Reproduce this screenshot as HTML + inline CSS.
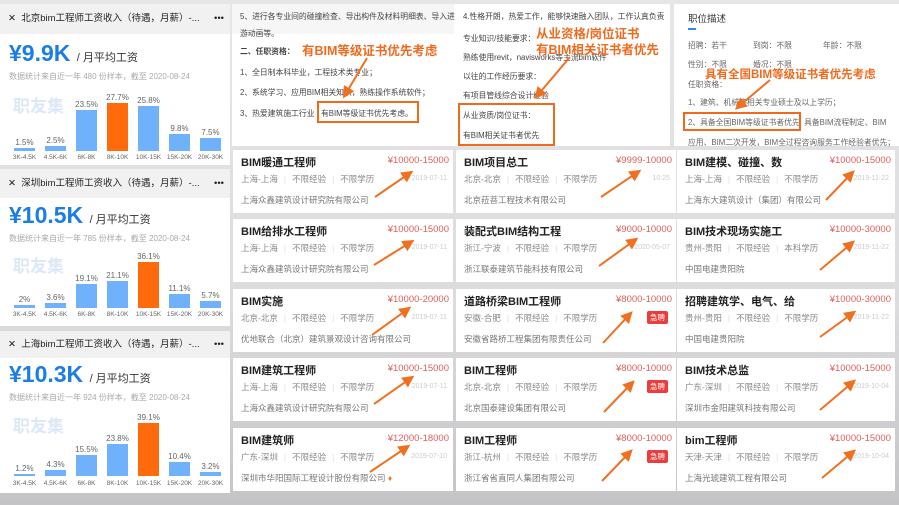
<!DOCTYPE html>
<html><head><meta charset="utf-8"><style>
*{margin:0;padding:0;box-sizing:border-box}
body{width:899px;height:505px;overflow:hidden;position:relative;font-family:"Liberation Sans","Noto Sans CJK SC",sans-serif;background:linear-gradient(180deg,#e6e6e8 0%,#dcdcde 60%,#c4c4c6 100%)}
.a{position:absolute;white-space:nowrap}
.hd{position:absolute;left:0;width:230px;background:#f1f1f1;font-size:9.5px;color:#222;padding-left:8px;white-space:nowrap;overflow:hidden}
.bd{position:absolute;left:0;width:230px;background:#fff}
.big{position:absolute;left:9px;color:#1a7ee6;font-weight:bold;font-size:23px}
.unit{font-size:11px;color:#333;font-weight:normal}
.st{position:absolute;left:9px;font-size:8px;color:#aaa;white-space:nowrap}
.wm{position:absolute;left:13px;font-size:17px;color:#dbe8f6;font-weight:bold}
.bar{position:absolute;width:21px;background:#6fb2fb}
.bar.o{background:#ff6a0a}
.pc{position:absolute;width:31px;text-align:center;font-size:8px;color:#666;margin-left:-5px}
.lb{position:absolute;width:31px;text-align:center;font-size:6.5px;color:#666;margin-left:-5px}
.card{position:absolute;background:#fff;height:63px}
.card .t{position:absolute;left:8px;top:4px;font-size:11px;font-weight:bold;color:#222;white-space:nowrap}
.card .s{position:absolute;right:4px;top:5px;font-size:9.5px;color:#e0605a}
.card .m{position:absolute;left:8px;top:23px;font-size:8.5px;color:#888;white-space:nowrap}
.card .m i{font-style:normal;color:#ddd;margin:0 6px}
.card .d{position:absolute;right:6px;top:25px;font-size:7px;color:#ccc}
.card .u{position:absolute;right:8px;top:22px;font-size:7.5px;color:#fff;background:#ea3d3d;border-radius:2px;padding:1px 3px}
.card .c{position:absolute;left:8px;top:44px;font-size:8.5px;color:#777;white-space:nowrap}
.tx{position:absolute;font-size:7.8px;color:#444;white-space:nowrap}
.or{position:absolute;color:#f06a1e;font-weight:bold;white-space:nowrap}
.box{position:absolute;border:2px solid #f06a1e}
</style></head><body>

<div class="hd" style="top:4px;height:30px;line-height:30px">✕&nbsp;&nbsp;北京bim工程师工资收入（待遇，月薪）-... <span style="position:absolute;right:6px">•••</span></div>
<div class="bd" style="top:34px;height:131px"></div>
<div class="big" style="top:40px">¥9.9K <span class="unit">/ 月平均工资</span></div>
<div class="st" style="top:71px">数据统计来自近一年 480 份样本，截至 2020-08-24</div>
<div class="wm" style="top:92px">职友集</div>

<div class="hd" style="top:169px;height:29px;line-height:29px">✕&nbsp;&nbsp;深圳bim工程师工资收入（待遇，月薪）-... <span style="position:absolute;right:6px">•••</span></div>
<div class="bd" style="top:198px;height:128px"></div>
<div class="big" style="top:202px">¥10.5K <span class="unit">/ 月平均工资</span></div>
<div class="st" style="top:233px">数据统计来自近一年 785 份样本，截至 2020-08-24</div>
<div class="wm" style="top:252px">职友集</div>

<div class="hd" style="top:331px;height:27px;line-height:27px">✕&nbsp;&nbsp;上海bim工程师工资收入（待遇，月薪）-... <span style="position:absolute;right:6px">•••</span></div>
<div class="bd" style="top:358px;height:135px"></div>
<div class="big" style="top:361px">¥10.3K <span class="unit">/ 月平均工资</span></div>
<div class="st" style="top:392px">数据统计来自近一年 924 份样本，截至 2020-08-24</div>
<div class="wm" style="top:412px">职友集</div>

<div class="bar" style="left:14px;top:148px;height:3px"></div><div class="pc" style="left:14px;top:138px">1.5%</div>
<div class="bar" style="left:45px;top:146px;height:5px"></div><div class="pc" style="left:45px;top:136px">2.5%</div>
<div class="bar" style="left:76px;top:110px;height:41px"></div><div class="pc" style="left:76px;top:100px">23.5%</div>
<div class="bar o" style="left:107px;top:103px;height:48px"></div><div class="pc" style="left:107px;top:93px">27.7%</div>
<div class="bar" style="left:138px;top:106px;height:45px"></div><div class="pc" style="left:138px;top:96px">25.8%</div>
<div class="bar" style="left:169px;top:134px;height:17px"></div><div class="pc" style="left:169px;top:124px">9.8%</div>
<div class="bar" style="left:200px;top:138px;height:13px"></div><div class="pc" style="left:200px;top:128px">7.5%</div>
<div class="lb" style="left:14px;top:154px">3K-4.5K</div><div class="lb" style="left:45px;top:154px">4.5K-6K</div><div class="lb" style="left:76px;top:154px">6K-8K</div><div class="lb" style="left:107px;top:154px">8K-10K</div><div class="lb" style="left:138px;top:154px">10K-15K</div><div class="lb" style="left:169px;top:154px">15K-20K</div><div class="lb" style="left:200px;top:154px">20K-30K</div>

<div class="bar" style="left:14px;top:305px;height:3px"></div><div class="pc" style="left:14px;top:295px">2%</div>
<div class="bar" style="left:45px;top:303px;height:5px"></div><div class="pc" style="left:45px;top:293px">3.6%</div>
<div class="bar" style="left:76px;top:284px;height:24px"></div><div class="pc" style="left:76px;top:274px">19.1%</div>
<div class="bar" style="left:107px;top:281px;height:27px"></div><div class="pc" style="left:107px;top:271px">21.1%</div>
<div class="bar o" style="left:138px;top:262px;height:46px"></div><div class="pc" style="left:138px;top:252px">36.1%</div>
<div class="bar" style="left:169px;top:294px;height:14px"></div><div class="pc" style="left:169px;top:284px">11.1%</div>
<div class="bar" style="left:200px;top:301px;height:7px"></div><div class="pc" style="left:200px;top:291px">5.7%</div>
<div class="lb" style="left:14px;top:311px">3K-4.5K</div><div class="lb" style="left:45px;top:311px">4.5K-6K</div><div class="lb" style="left:76px;top:311px">6K-8K</div><div class="lb" style="left:107px;top:311px">8K-10K</div><div class="lb" style="left:138px;top:311px">10K-15K</div><div class="lb" style="left:169px;top:311px">15K-20K</div><div class="lb" style="left:200px;top:311px">20K-30K</div>

<div class="bar" style="left:14px;top:474px;height:2px"></div><div class="pc" style="left:14px;top:464px">1.2%</div>
<div class="bar" style="left:45px;top:470px;height:6px"></div><div class="pc" style="left:45px;top:460px">4.3%</div>
<div class="bar" style="left:76px;top:455px;height:21px"></div><div class="pc" style="left:76px;top:445px">15.5%</div>
<div class="bar" style="left:107px;top:444px;height:32px"></div><div class="pc" style="left:107px;top:434px">23.8%</div>
<div class="bar o" style="left:138px;top:423px;height:53px"></div><div class="pc" style="left:138px;top:413px">39.1%</div>
<div class="bar" style="left:169px;top:462px;height:14px"></div><div class="pc" style="left:169px;top:452px">10.4%</div>
<div class="bar" style="left:200px;top:472px;height:4px"></div><div class="pc" style="left:200px;top:462px">3.2%</div>
<div class="lb" style="left:14px;top:480px">3K-4.5K</div><div class="lb" style="left:45px;top:480px">4.5K-6K</div><div class="lb" style="left:76px;top:480px">6K-8K</div><div class="lb" style="left:107px;top:480px">8K-10K</div><div class="lb" style="left:138px;top:480px">10K-15K</div><div class="lb" style="left:169px;top:480px">15K-20K</div><div class="lb" style="left:200px;top:480px">20K-30K</div>

<div style="position:absolute;left:232px;top:4px;width:222px;height:30px;background:#f6f6f6"></div>
<div style="position:absolute;left:232px;top:34px;width:222px;height:112px;background:#fff"></div>
<div style="position:absolute;left:454px;top:4px;width:216px;height:142px;background:#fff"></div>
<div class="tx" style="left:240px;top:11px">5、进行各专业间的碰撞检查、导出构件及材料明细表、导入进</div>
<div class="tx" style="left:240px;top:28px">游动画等。</div>
<div class="tx" style="left:240px;top:46px;font-weight:bold">二、任职资格：</div>
<div class="tx" style="left:240px;top:67px">1、全日制本科毕业，工程技术类专业；</div>
<div class="tx" style="left:240px;top:87px">2、系统学习、应用BIM相关知识，熟练操作系统软件；</div>
<div class="tx" style="left:240px;top:108px">3、热爱建筑施工行业 &nbsp;&nbsp;有BIM等级证书优先考虑。</div>
<div class="box" style="left:317px;top:101px;width:102px;height:22px"></div>
<div class="or" style="left:302px;top:40px;font-size:12.5px">有BIM等级证书优先考虑</div>

<div class="tx" style="left:463px;top:11px">4.性格开朗，热爱工作，能够快速融入团队，工作认真负责</div>
<div class="tx" style="left:463px;top:33px">专业知识/技能要求：</div>
<div class="tx" style="left:463px;top:52px">熟练使用revit，navisworks等主流bim软件</div>
<div class="tx" style="left:463px;top:71px">以往的工作经历要求：</div>
<div class="tx" style="left:463px;top:90px">有项目管线综合设计经验</div>
<div class="tx" style="left:463px;top:110px">从业资质/岗位证书：</div>
<div class="tx" style="left:463px;top:130px">有BIM相关证书者优先</div>
<div class="box" style="left:458px;top:103px;width:97px;height:43px"></div>
<div class="or" style="left:536px;top:23px;font-size:12.5px">从业资格/岗位证书</div>
<div class="or" style="left:536px;top:39px;font-size:12.5px">有BIM相关证书者优先</div>

<div style="position:absolute;left:674px;top:4px;width:225px;height:142px;background:#fff"></div>
<div class="tx" style="left:688px;top:11px;font-size:9.5px;color:#333">职位描述</div>
<div style="position:absolute;left:688px;top:28px;width:8px;height:2px;background:#2f8ae8"></div>
<div class="tx" style="left:688px;top:40px;color:#666">招聘：若干</div><div class="tx" style="left:753px;top:40px;color:#666">到岗：不限</div><div class="tx" style="left:823px;top:40px;color:#666">年龄：不限</div>
<div class="tx" style="left:688px;top:59px;color:#666">性别：不限</div><div class="tx" style="left:753px;top:59px;color:#666">婚况：不限</div>
<div class="tx" style="left:688px;top:79px;color:#666">任职资格：</div>
<div class="tx" style="left:688px;top:97px;color:#666">1、建筑、机械等相关专业硕士及以上学历；</div>
<div class="tx" style="left:688px;top:117px;color:#666">2、具备全国BIM等级证书者优先 &nbsp;具备BIM流程制定、BIM</div>
<div class="tx" style="left:688px;top:137px;color:#666">应用、BIM二次开发，BIM全过程咨询服务工作经验者优先；</div>
<div class="box" style="left:683px;top:112px;width:118px;height:19px"></div>
<div class="or" style="left:705px;top:66px;font-size:11.5px">具有全国BIM等级证书者优先考虑</div>

<div class="card" style="left:233px;top:150px;width:220px"><div class="t">BIM暖通工程师</div><div class="s">¥10000-15000</div><div class="m">上海-上海<i>|</i>不限经验<i>|</i>不限学历</div><div class="d">2019-07-11</div><div class="c">上海众鑫建筑设计研究院有限公司</div></div>
<div class="card" style="left:233px;top:219px;width:220px"><div class="t">BIM给排水工程师</div><div class="s">¥10000-15000</div><div class="m">上海-上海<i>|</i>不限经验<i>|</i>不限学历</div><div class="d">2019-07-11</div><div class="c">上海众鑫建筑设计研究院有限公司</div></div>
<div class="card" style="left:233px;top:289px;width:220px"><div class="t">BIM实施</div><div class="s">¥10000-20000</div><div class="m">北京-北京<i>|</i>不限经验<i>|</i>不限学历</div><div class="d">2019-07-11</div><div class="c">优地联合（北京）建筑景观设计咨询有限公司</div></div>
<div class="card" style="left:233px;top:358px;width:220px"><div class="t">BIM建筑工程师</div><div class="s">¥10000-15000</div><div class="m">上海-上海<i>|</i>不限经验<i>|</i>不限学历</div><div class="d">2019-07-11</div><div class="c">上海众鑫建筑设计研究院有限公司</div></div>
<div class="card" style="left:233px;top:428px;width:220px"><div class="t">BIM建筑师</div><div class="s">¥12000-18000</div><div class="m">广东-深圳<i>|</i>不限经验<i>|</i>不限学历</div><div class="d">2019-07-10</div><div class="c">深圳市华阳国际工程设计股份有限公司 <span style="color:#f07a30">♦</span></div></div>
<div class="card" style="left:456px;top:150px;width:220px"><div class="t">BIM项目总工</div><div class="s">¥9999-10000</div><div class="m">北京-北京<i>|</i>不限经验<i>|</i>不限学历</div><div class="d">10:25</div><div class="c">北京菈菩工程技术有限公司</div></div>
<div class="card" style="left:456px;top:219px;width:220px"><div class="t">装配式BIM结构工程</div><div class="s">¥9000-10000</div><div class="m">浙江-宁波<i>|</i>不限经验<i>|</i>不限学历</div><div class="d">2020-05-07</div><div class="c">浙江联泰建筑节能科技有限公司</div></div>
<div class="card" style="left:456px;top:289px;width:220px"><div class="t">道路桥梁BIM工程师</div><div class="s">¥8000-10000</div><div class="m">安徽-合肥<i>|</i>不限经验<i>|</i>不限学历</div><div class="u">急聘</div><div class="c">安徽省路桥工程集团有限责任公司</div></div>
<div class="card" style="left:456px;top:358px;width:220px"><div class="t">BIM工程师</div><div class="s">¥8000-10000</div><div class="m">北京-北京<i>|</i>不限经验<i>|</i>不限学历</div><div class="u">急聘</div><div class="c">北京国泰建设集团有限公司</div></div>
<div class="card" style="left:456px;top:428px;width:220px"><div class="t">BIM工程师</div><div class="s">¥8000-10000</div><div class="m">浙江-杭州<i>|</i>不限经验<i>|</i>不限学历</div><div class="u">急聘</div><div class="c">浙江省省直同人集团有限公司</div></div>
<div class="card" style="left:677px;top:150px;width:218px"><div class="t">BIM建模、碰撞、数</div><div class="s">¥10000-15000</div><div class="m">上海-上海<i>|</i>不限经验<i>|</i>不限学历</div><div class="d">2019-11-22</div><div class="c">上海东大建筑设计（集团）有限公司</div></div>
<div class="card" style="left:677px;top:219px;width:218px"><div class="t">BIM技术现场实施工</div><div class="s">¥10000-30000</div><div class="m">贵州-贵阳<i>|</i>不限经验<i>|</i>本科学历</div><div class="d">2019-11-22</div><div class="c">中国电建贵阳院</div></div>
<div class="card" style="left:677px;top:289px;width:218px"><div class="t">招聘建筑学、电气、给</div><div class="s">¥10000-30000</div><div class="m">贵州-贵阳<i>|</i>不限经验<i>|</i>不限学历</div><div class="d">2019-11-22</div><div class="c">中国电建贵阳院</div></div>
<div class="card" style="left:677px;top:358px;width:218px"><div class="t">BIM技术总监</div><div class="s">¥10000-15000</div><div class="m">广东-深圳<i>|</i>不限经验<i>|</i>不限学历</div><div class="d">2019-10-04</div><div class="c">深圳市金阳建筑科技有限公司</div></div>
<div class="card" style="left:677px;top:428px;width:218px"><div class="t">bim工程师</div><div class="s">¥10000-15000</div><div class="m">天津-天津<i>|</i>不限经验<i>|</i>不限学历</div><div class="d">2019-10-04</div><div class="c">上海光琥建筑工程有限公司</div></div>

<svg width="899" height="505" style="position:absolute;left:0;top:0" viewBox="0 0 899 505">
<defs><marker id="ah" markerWidth="6" markerHeight="6" refX="4" refY="3" orient="auto"><path d="M0,0 L6,3 L0,6 z" fill="#f07020"/></marker></defs>
<g stroke="#f07020" stroke-width="2" fill="none" marker-end="url(#ah)">
<line x1="375" y1="197" x2="410" y2="173"/><line x1="374" y1="265" x2="411" y2="242"/><line x1="372" y1="335" x2="408" y2="309"/><line x1="374" y1="404" x2="411" y2="378"/><line x1="370" y1="472" x2="407" y2="447"/>
<line x1="601" y1="197" x2="638" y2="172"/><line x1="599" y1="266" x2="635" y2="240"/><line x1="603" y1="343" x2="630" y2="314"/><line x1="604" y1="412" x2="632" y2="383"/><line x1="602" y1="481" x2="630" y2="452"/>
<line x1="826" y1="200" x2="852" y2="173"/><line x1="820" y1="270" x2="852" y2="243"/><line x1="820" y1="337" x2="853" y2="313"/><line x1="820" y1="410" x2="853" y2="382"/><line x1="822" y1="478" x2="853" y2="452"/>
<line x1="367" y1="58" x2="345" y2="95"/><line x1="570" y1="57" x2="537" y2="96"/><line x1="770" y1="80" x2="738" y2="107"/>
</g></svg>
</body></html>
